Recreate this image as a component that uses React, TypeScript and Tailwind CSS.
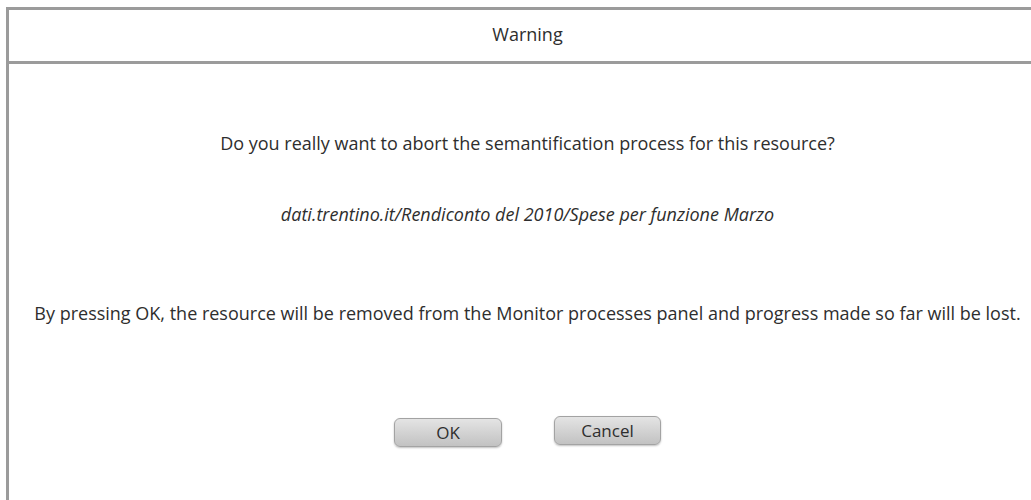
import React from 'react';

export default function App() {
  return (
    <div className="h-[500px] w-[1031px] overflow-hidden bg-white pl-[6px] pt-[7px] font-['Open_Sans',sans-serif] text-[#2e2e2e]">
      <div className="flex h-[520px] w-[1040px] flex-col border-l-[3px] border-t-[3px] border-[#9b9b9b]">
        <div className="flex h-[54px] items-center justify-center border-b-[3px] border-[#9b9b9b] pb-[3px] text-[18px] leading-[18px]">
          Warning
        </div>
        <div className="flex flex-col items-center text-[18px] leading-[18px]">
          <p className="mt-[70px]">Do you really want to abort the semantification process for this resource?</p>
          <p className="mt-[53px] italic">dati.trentino.it/Rendiconto del 2010/Spese per funzione Marzo</p>
          <p className="mt-[81px]">
            By pressing OK, the resource will be removed from the Monitor processes panel and progress made so far will be lost.
          </p>
          <div className="mt-[94px] flex items-end gap-[52px]">
            <button className="mb-[-2px] h-[29px] w-[108px] rounded-[6px] border border-[#a3a3a3] bg-gradient-to-b from-[#e4e4e4] to-[#c2c2c2] text-[17px] shadow-[0_1px_2px_rgba(0,0,0,0.25)]">
              OK
            </button>
            <button className="h-[29px] w-[107px] rounded-[6px] border border-[#a3a3a3] bg-gradient-to-b from-[#e4e4e4] to-[#c2c2c2] text-[17px] shadow-[0_1px_2px_rgba(0,0,0,0.25)]">
              Cancel
            </button>
          </div>
        </div>
      </div>
    </div>
  );
}
